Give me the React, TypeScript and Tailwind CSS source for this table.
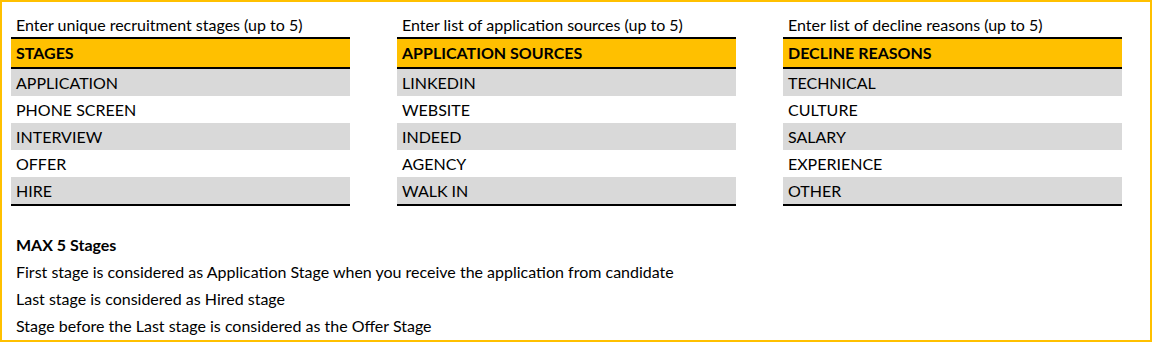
const stages = ["APPLICATION", "PHONE SCREEN", "INTERVIEW", "OFFER", "HIRE"];
const sources = ["LINKEDIN", "WEBSITE", "INDEED", "AGENCY", "WALK IN"];
const reasons = ["TECHNICAL", "CULTURE", "SALARY", "EXPERIENCE", "OTHER"];

const notes = [
  "First stage is considered as Application Stage when you receive the application from candidate",
  "Last stage is considered as Hired stage",
  "Stage before the Last stage is considered as the Offer Stage",
];

interface ListTableProps {
  label: string;
  title: string;
  items: string[];
}

const ListTable = ({ label, title, items }: ListTableProps) => (
  <div className="w-[339px]">
    <div className="flex h-[26px] items-center px-[5px] pt-[2px]">{label}</div>
    <div className="border-y-2 border-black bg-[#FFC000] px-[5px] leading-[28px] font-bold">{title}</div>
    <div className="border-b-2 border-black">
      {items.map((item, i) => (
        <div
          key={item}
          className={`px-[5px] leading-[27px] ${i % 2 === 0 ? "bg-[#D9D9D9]" : "bg-white"}`}
        >
          {item}
        </div>
      ))}
    </div>
  </div>
);

export default function App() {
  return (
    <div className="w-[1153px] h-[342px] bg-white">
      <div
        className="h-[342px] w-[1152px] border-2 border-[#FFC000] text-[16px] text-black"
        style={{ fontFamily: "Lato, 'Open Sans', sans-serif" }}
      >
        <div className="flex gap-[47px] pl-[9px] pt-[9px]">
          <ListTable label="Enter unique recruitment stages (up to 5)" title="STAGES" items={stages} />
          <ListTable label="Enter list of application sources (up to 5)" title="APPLICATION SOURCES" items={sources} />
          <ListTable label="Enter list of decline reasons (up to 5)" title="DECLINE REASONS" items={reasons} />
        </div>
        <div className="mt-[25px] pl-[14px]">
          <div className="font-bold leading-[27px]">MAX 5 Stages</div>
          {notes.map((n) => (
            <div key={n} className="leading-[27px]">
              {n}
            </div>
          ))}
        </div>
      </div>
    </div>
  );
}
